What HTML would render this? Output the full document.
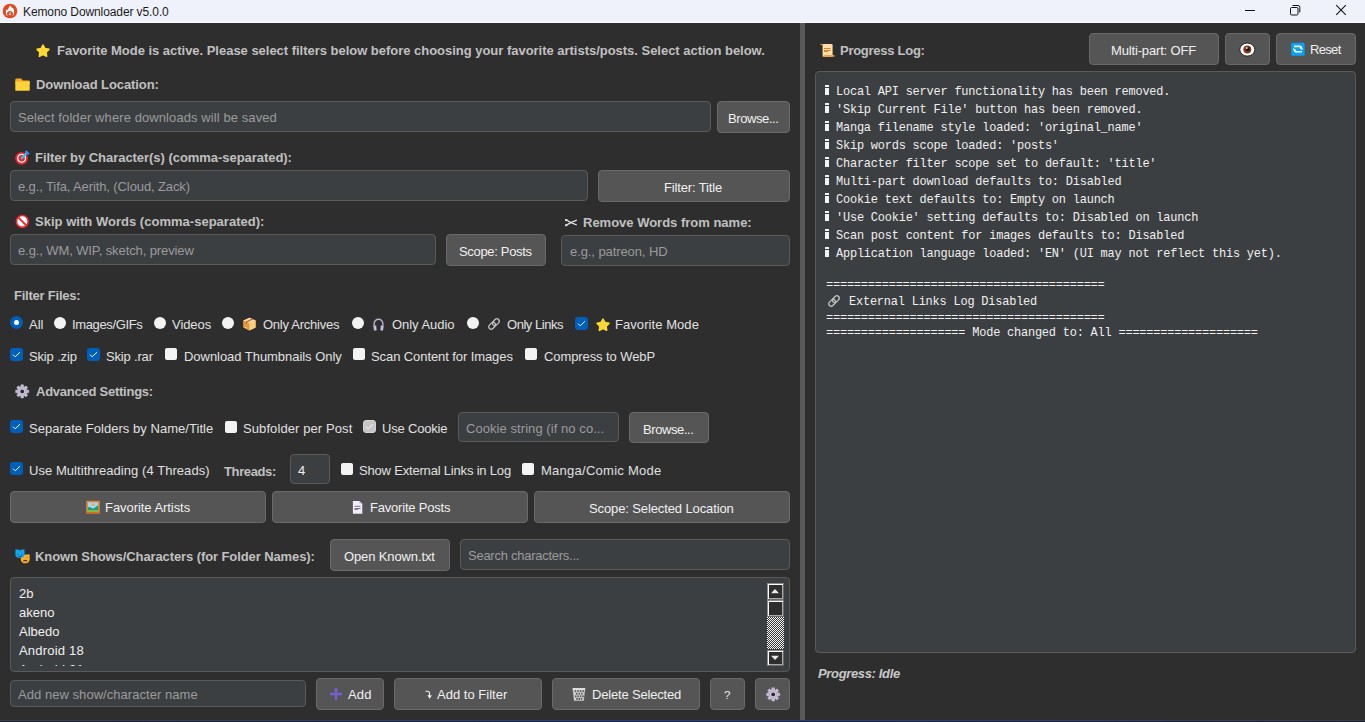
<!DOCTYPE html>
<html><head><meta charset="utf-8">
<style>
*{box-sizing:border-box}
html,body{margin:0;padding:0}
body{width:1365px;height:722px;overflow:hidden;position:relative;background:#2E2E2E;font-family:"Liberation Sans",sans-serif;font-size:13px;color:#E0E0E0}
.a{position:absolute}
.t{position:absolute;white-space:nowrap;line-height:16px;font-size:13px}
.lb{font-weight:bold;color:#C0C0C0}
.ph{color:#9A9B9C}
.bt{color:#F0F0F0}
.cb{color:#E0E0E0}
.inp{position:absolute;background:#3C3F41;border:1px solid #5A5A5A;border-radius:4px}
.btn{position:absolute;background:#555555;border:1px solid #6A6A6A;border-radius:4px}
.chk{position:absolute;width:13px;height:13px;border-radius:3px;background:#005FB8}
.unc{position:absolute;width:12px;height:12px;border-radius:2px;background:#F3F3F3}
.rad{position:absolute;width:12px;height:12px;border-radius:50%;background:#F3F3F3}
.log{position:absolute;white-space:pre;font-family:"Liberation Mono",monospace;font-size:11.95px;letter-spacing:-0.2px;line-height:16px;color:#F0F0F0}
svg{position:absolute;overflow:visible}
</style></head><body>

<!-- title bar -->
<div class="a" style="left:0;top:0;width:1365px;height:22px;background:#EFF2FB"></div>
<div class="a" style="left:0;top:22px;width:1365px;height:1px;background:#FFFFFF"></div>
<div class="t" style="left:23px;top:4px;font-size:12px;color:#1A1A1A;letter-spacing:-0.1px">Kemono Downloader v5.0.0</div>

<!-- splitter -->
<div class="a" style="left:800px;top:23px;width:5px;height:697px;background:#5A5A5A"></div>
<!-- bottom border -->
<div class="a" style="left:0;top:720px;width:1365px;height:1px;background:linear-gradient(90deg,#3A3D45 0%,#35405E 45%,#353D58 70%,#3A3C46 100%)"></div>
<div class="a" style="left:0;top:721px;width:1365px;height:1px;background:linear-gradient(90deg,#1B202C 0%,#16235E 45%,#172254 70%,#1B1E2C 100%)"></div>

<!-- LEFT PANEL -->
<div class="t lb" style="left:57px;top:43px;letter-spacing:-0.022px">Favorite Mode is active. Please select filters below before choosing your favorite artists/posts. Select action below.</div>

<div class="t lb" style="left:36px;top:77px;letter-spacing:-0.076px">Download Location:</div>
<div class="inp" style="left:10px;top:101px;width:701px;height:31px"></div>
<div class="t ph" style="left:18px;top:110px;letter-spacing:0.088px">Select folder where downloads will be saved</div>
<div class="btn" style="left:717px;top:101px;width:73px;height:32px"></div>
<div class="t bt" style="left:728px;top:111px;letter-spacing:-0.41px">Browse...</div>

<div class="t lb" style="left:35px;top:150px;letter-spacing:-0.042px">Filter by Character(s) (comma-separated):</div>
<div class="inp" style="left:10px;top:170px;width:578px;height:31px"></div>
<div class="t ph" style="left:18px;top:179px;letter-spacing:-0.109px">e.g., Tifa, Aerith, (Cloud, Zack)</div>
<div class="btn" style="left:598px;top:170px;width:192px;height:32px"></div>
<div class="t bt" style="left:664px;top:180px;letter-spacing:-0.150px">Filter: Title</div>

<div class="t lb" style="left:35px;top:214px;letter-spacing:0.021px">Skip with Words (comma-separated):</div>
<div class="t lb" style="left:583px;top:215px;letter-spacing:-0.005px">Remove Words from name:</div>
<div class="inp" style="left:10px;top:234px;width:426px;height:31px"></div>
<div class="t ph" style="left:18px;top:243px;letter-spacing:-0.107px">e.g., WM, WIP, sketch, preview</div>
<div class="btn" style="left:446px;top:234px;width:100px;height:32px"></div>
<div class="t bt" style="left:459px;top:244px;letter-spacing:-0.318px">Scope: Posts</div>
<div class="inp" style="left:561px;top:235px;width:229px;height:31px"></div>
<div class="t ph" style="left:570px;top:244px;letter-spacing:-0.087px">e.g., patreon, HD</div>

<div class="t lb" style="left:14px;top:288px;letter-spacing:-0.225px">Filter Files:</div>

<!-- radios -->
<div class="a" style="left:10px;top:316px;width:13px;height:13px;border-radius:50%;background:#005FB8"></div>
<div class="a" style="left:14px;top:320px;width:5px;height:5px;border-radius:50%;background:#FFFFFF"></div>
<div class="t cb" style="left:29px;top:317px">All</div>
<div class="rad" style="left:54px;top:317px"></div>
<div class="t cb" style="left:72px;top:317px;letter-spacing:-0.360px">Images/GIFs</div>
<div class="rad" style="left:154px;top:317px"></div>
<div class="t cb" style="left:172px;top:317px;letter-spacing:-0.060px">Videos</div>
<div class="rad" style="left:222px;top:317px"></div>
<div class="t cb" style="left:263px;top:317px;letter-spacing:-0.258px">Only Archives</div>
<div class="rad" style="left:352px;top:317px"></div>
<div class="t cb" style="left:392px;top:317px;letter-spacing:-0.044px">Only Audio</div>
<div class="rad" style="left:467px;top:317px"></div>
<div class="t cb" style="left:507px;top:317px;letter-spacing:-0.467px">Only Links</div>
<div class="chk" style="left:575px;top:317px"></div>
<svg width="13" height="13" style="left:575px;top:317px"><polyline points="3,6.6 5.2,8.8 10,4.2" fill="none" stroke="#F2F5FA" stroke-width="1"/></svg>
<div class="t cb" style="left:615px;top:317px;letter-spacing:0.067px">Favorite Mode</div>

<!-- checkboxes row -->
<div class="chk" style="left:10px;top:348px"></div>
<svg width="13" height="13" style="left:10px;top:348px"><polyline points="3,6.6 5.2,8.8 10,4.2" fill="none" stroke="#F2F5FA" stroke-width="1"/></svg>
<div class="t cb" style="left:29px;top:349px;letter-spacing:-0.150px">Skip .zip</div>
<div class="chk" style="left:87px;top:348px"></div>
<svg width="13" height="13" style="left:87px;top:348px"><polyline points="3,6.6 5.2,8.8 10,4.2" fill="none" stroke="#F2F5FA" stroke-width="1"/></svg>
<div class="t cb" style="left:106px;top:349px;letter-spacing:-0.175px">Skip .rar</div>
<div class="unc" style="left:165px;top:348px"></div>
<div class="t cb" style="left:184px;top:349px;letter-spacing:-0.043px">Download Thumbnails Only</div>
<div class="unc" style="left:353px;top:348px"></div>
<div class="t cb" style="left:371px;top:349px;letter-spacing:-0.086px">Scan Content for Images</div>
<div class="unc" style="left:525px;top:348px"></div>
<div class="t cb" style="left:544px;top:349px;letter-spacing:-0.093px">Compress to WebP</div>

<div class="t lb" style="left:36px;top:384px;letter-spacing:-0.247px">Advanced Settings:</div>

<!-- row adv 1 -->
<div class="chk" style="left:10px;top:420px"></div>
<svg width="13" height="13" style="left:10px;top:420px"><polyline points="3,6.6 5.2,8.8 10,4.2" fill="none" stroke="#F2F5FA" stroke-width="1"/></svg>
<div class="t cb" style="left:29px;top:421px;letter-spacing:0.041px">Separate Folders by Name/Title</div>
<div class="unc" style="left:225px;top:421px"></div>
<div class="t cb" style="left:243px;top:421px;letter-spacing:0.094px">Subfolder per Post</div>
<div class="a" style="left:363px;top:420px;width:13px;height:13px;border-radius:3px;background:#C6C6C6;border:1px solid #D4D4D4"></div>
<svg width="13" height="13" style="left:363px;top:420px"><polyline points="3,6.6 5.2,8.8 10,4.2" fill="none" stroke="#F6F6F6" stroke-width="1"/></svg>
<div class="t cb" style="left:382px;top:421px;letter-spacing:-0.189px">Use Cookie</div>
<div class="inp" style="left:458px;top:412px;width:161px;height:30px"></div>
<div class="t ph" style="left:466px;top:421px;letter-spacing:0.064px">Cookie string (if no co...</div>
<div class="btn" style="left:629px;top:412px;width:80px;height:31px"></div>
<div class="t bt" style="left:643px;top:422px;letter-spacing:-0.41px">Browse...</div>

<!-- row adv 2 -->
<div class="chk" style="left:10px;top:462px"></div>
<svg width="13" height="13" style="left:10px;top:462px"><polyline points="3,6.6 5.2,8.8 10,4.2" fill="none" stroke="#F2F5FA" stroke-width="1"/></svg>
<div class="t cb" style="left:29px;top:463px;letter-spacing:0.055px">Use Multithreading (4 Threads)</div>
<div class="t lb" style="left:224px;top:464px;letter-spacing:-0.371px">Threads:</div>
<div class="inp" style="left:290px;top:454px;width:40px;height:30px"></div>
<div class="t bt" style="left:298px;top:463px">4</div>
<div class="unc" style="left:341px;top:463px"></div>
<div class="t cb" style="left:359px;top:463px;letter-spacing:-0.188px">Show External Links in Log</div>
<div class="unc" style="left:522px;top:463px"></div>
<div class="t cb" style="left:541px;top:463px;letter-spacing:0.267px">Manga/Comic Mode</div>

<!-- favorite buttons -->
<div class="btn" style="left:10px;top:491px;width:256px;height:32px"></div>
<div class="t bt" style="left:105px;top:500px;letter-spacing:-0.053px">Favorite Artists</div>
<div class="btn" style="left:272px;top:491px;width:256px;height:32px"></div>
<div class="t bt" style="left:370px;top:500px;letter-spacing:-0.200px">Favorite Posts</div>
<div class="btn" style="left:534px;top:491px;width:256px;height:32px"></div>
<div class="t bt" style="left:589px;top:501px;letter-spacing:-0.113px">Scope: Selected Location</div>

<!-- known shows -->
<div class="t lb" style="left:35px;top:549px;letter-spacing:-0.098px">Known Shows/Characters (for Folder Names):</div>
<div class="btn" style="left:330px;top:539px;width:120px;height:32px"></div>
<div class="t bt" style="left:344px;top:549px;letter-spacing:-0.123px">Open Known.txt</div>
<div class="inp" style="left:460px;top:539px;width:330px;height:31px"></div>
<div class="t ph" style="left:468px;top:548px;letter-spacing:-0.258px">Search characters...</div>

<div class="inp" style="left:10px;top:577px;width:780px;height:95px;overflow:hidden">
</div>
<div class="a" style="left:11px;top:582px;width:750px;height:84px;overflow:hidden">
  <div class="t bt" style="left:8px;top:4px">2b</div>
  <div class="t bt" style="left:8px;top:23px">akeno</div>
  <div class="t bt" style="left:8px;top:42px">Albedo</div>
  <div class="t bt" style="left:8px;top:61px;letter-spacing:0.2px">Android 18</div>
  <div class="t bt" style="left:8px;top:80px;letter-spacing:0.2px">Android 21</div>
</div>

<!-- scrollbar -->
<div class="a" style="left:767px;top:583px;width:17px;height:17px;background:#2E2E2E;border-top:1px solid #8C8C8C;border-left:1px solid #8C8C8C;border-right:1px solid #6A6A6A;border-bottom:1px solid #6A6A6A;box-shadow:inset 1px 1px 0 #FFFFFF,inset -1px -1px 0 #A8A8A8"></div>
<svg width="17" height="17" style="left:767px;top:583px"><path d="M4 10.2H12L8 6Z" fill="#E8E8E8"/></svg>
<div class="a" style="left:767px;top:600px;width:17px;height:17px;background:#2E2E2E;border-top:1px solid #8C8C8C;border-left:1px solid #8C8C8C;border-right:1px solid #6A6A6A;border-bottom:1px solid #6A6A6A;box-shadow:inset 1px 1px 0 #FFFFFF,inset -1px -1px 0 #A8A8A8"></div>
<svg width="17" height="32" style="left:767px;top:617px" shape-rendering="crispEdges"><defs><pattern id="ck" width="2" height="2" patternUnits="userSpaceOnUse"><rect width="2" height="2" fill="#3A3A3A"/><rect width="1" height="1" fill="#F4F4F4"/><rect x="1" y="1" width="1" height="1" fill="#F4F4F4"/></pattern></defs><rect width="17" height="32" fill="url(#ck)"/></svg>
<div class="a" style="left:767px;top:650px;width:17px;height:16px;background:#2E2E2E;border-top:1px solid #8C8C8C;border-left:1px solid #8C8C8C;border-right:1px solid #6A6A6A;border-bottom:1px solid #6A6A6A;box-shadow:inset 1px 1px 0 #FFFFFF,inset -1px -1px 0 #A8A8A8"></div>
<svg width="17" height="16" style="left:767px;top:650px"><path d="M4 5.8H12L8 10Z" fill="#E8E8E8"/></svg>
<!-- bottom row -->
<div class="inp" style="left:10px;top:680px;width:296px;height:27px"></div>
<div class="t ph" style="left:18px;top:687px;letter-spacing:0.046px">Add new show/character name</div>
<div class="btn" style="left:316px;top:678px;width:68px;height:32px"></div>
<div class="t bt" style="left:348px;top:687px;letter-spacing:0.150px">Add</div>
<div class="btn" style="left:394px;top:678px;width:148px;height:32px"></div>
<div class="t bt" style="left:437px;top:687px;letter-spacing:0.017px">Add to Filter</div>
<div class="btn" style="left:552px;top:678px;width:148px;height:32px"></div>
<div class="t bt" style="left:592px;top:687px;letter-spacing:-0.179px">Delete Selected</div>
<div class="btn" style="left:710px;top:678px;width:35px;height:32px"></div>
<div class="t bt" style="left:724px;top:687px;font-size:11.5px">?</div>
<div class="btn" style="left:755px;top:678px;width:35px;height:32px"></div>

<!-- RIGHT PANEL -->
<div class="t lb" style="left:840px;top:43px;letter-spacing:-0.267px">Progress Log:</div>
<div class="btn" style="left:1089px;top:33px;width:130px;height:32px"></div>
<div class="t bt" style="left:1111px;top:43px;letter-spacing:-0.157px">Multi-part: OFF</div>
<div class="btn" style="left:1225px;top:33px;width:45px;height:32px"></div>
<div class="btn" style="left:1276px;top:33px;width:80px;height:32px"></div>
<div class="t bt" style="left:1310px;top:42px;letter-spacing:-0.675px">Reset</div>

<div class="inp" style="left:815px;top:71px;width:541px;height:582px"></div>
<div class="log" style="left:836px;top:84px">Local API server functionality has been removed.</div>
<svg class="a" width="6" height="11" style="left:825px;top:85px"><rect x="0" y="0" width="4" height="2" fill="#F4F4F4"/><rect x="0" y="3" width="4" height="7" fill="#F4F4F4"/></svg>
<div class="log" style="left:836px;top:102px">&#39;Skip Current File&#39; button has been removed.</div>
<svg class="a" width="6" height="11" style="left:825px;top:103px"><rect x="0" y="0" width="4" height="2" fill="#F4F4F4"/><rect x="0" y="3" width="4" height="7" fill="#F4F4F4"/></svg>
<div class="log" style="left:836px;top:120px">Manga filename style loaded: &#39;original_name&#39;</div>
<svg class="a" width="6" height="11" style="left:825px;top:121px"><rect x="0" y="0" width="4" height="2" fill="#F4F4F4"/><rect x="0" y="3" width="4" height="7" fill="#F4F4F4"/></svg>
<div class="log" style="left:836px;top:138px">Skip words scope loaded: &#39;posts&#39;</div>
<svg class="a" width="6" height="11" style="left:825px;top:139px"><rect x="0" y="0" width="4" height="2" fill="#F4F4F4"/><rect x="0" y="3" width="4" height="7" fill="#F4F4F4"/></svg>
<div class="log" style="left:836px;top:156px">Character filter scope set to default: &#39;title&#39;</div>
<svg class="a" width="6" height="11" style="left:825px;top:157px"><rect x="0" y="0" width="4" height="2" fill="#F4F4F4"/><rect x="0" y="3" width="4" height="7" fill="#F4F4F4"/></svg>
<div class="log" style="left:836px;top:174px">Multi-part download defaults to: Disabled</div>
<svg class="a" width="6" height="11" style="left:825px;top:175px"><rect x="0" y="0" width="4" height="2" fill="#F4F4F4"/><rect x="0" y="3" width="4" height="7" fill="#F4F4F4"/></svg>
<div class="log" style="left:836px;top:192px">Cookie text defaults to: Empty on launch</div>
<svg class="a" width="6" height="11" style="left:825px;top:193px"><rect x="0" y="0" width="4" height="2" fill="#F4F4F4"/><rect x="0" y="3" width="4" height="7" fill="#F4F4F4"/></svg>
<div class="log" style="left:836px;top:210px">&#39;Use Cookie&#39; setting defaults to: Disabled on launch</div>
<svg class="a" width="6" height="11" style="left:825px;top:211px"><rect x="0" y="0" width="4" height="2" fill="#F4F4F4"/><rect x="0" y="3" width="4" height="7" fill="#F4F4F4"/></svg>
<div class="log" style="left:836px;top:228px">Scan post content for images defaults to: Disabled</div>
<svg class="a" width="6" height="11" style="left:825px;top:229px"><rect x="0" y="0" width="4" height="2" fill="#F4F4F4"/><rect x="0" y="3" width="4" height="7" fill="#F4F4F4"/></svg>
<div class="log" style="left:836px;top:246px">Application language loaded: &#39;EN&#39; (UI may not reflect this yet).</div>
<svg class="a" width="6" height="11" style="left:825px;top:247px"><rect x="0" y="0" width="4" height="2" fill="#F4F4F4"/><rect x="0" y="3" width="4" height="7" fill="#F4F4F4"/></svg>
<div class="log" style="left:826px;top:277px">========================================</div>
<div class="log" style="left:849px;top:294px">External Links Log Disabled</div>
<div class="log" style="left:826px;top:310px">========================================</div>
<div class="log" style="left:826px;top:325px">==================== Mode changed to: All ====================</div>


<div class="t" style="left:818px;top:666px;font-weight:bold;font-style:italic;color:#C8C8C8;letter-spacing:-0.346px">Progress: Idle</div>

<svg width="16" height="16" style="left:2px;top:3px"><circle cx="8" cy="8" r="7.3" fill="#E2481F"/><path d="M8 2.2 C9 4 10.6 5 11.4 5.6 C12.6 7.8 12.4 11 10.8 13 L5.2 13 C3.6 11 3.4 8.4 4.4 6.2 C5 7 5.6 7.2 5.9 6.8 C6.4 5 7.6 3.8 8 2.2Z" fill="#FFFFFF"/><circle cx="8" cy="11" r="3" fill="#E2481F"/><path d="M7.4 9.2H8.6V11H9.6L8 12.6 6.4 11H7.4Z" fill="#FFFFFF" opacity="0.8"/></svg>
<div class="a" style="left:1245px;top:10px;width:10px;height:1px;background:#111"></div>
<svg width="12" height="12" style="left:1289px;top:4px"><rect x="1.5" y="3.5" width="7.5" height="7.5" rx="1.2" fill="none" stroke="#111" stroke-width="1"/><path d="M3.5 1.5H9A1.8 1.8 0 0 1 10.8 3.3V8.5" fill="none" stroke="#111" stroke-width="1"/></svg>
<svg width="12" height="12" style="left:1335px;top:4px"><path d="M1.2 1.2L10.8 10.8M10.8 1.2L1.2 10.8" stroke="#111" stroke-width="1.05"/></svg>
<svg width="14" height="13" style="left:36px;top:44px"><path d="M7.00 1.10 L8.94 4.63 L12.90 5.38 L10.14 8.32 L10.64 12.32 L7.00 10.60 L3.36 12.32 L3.86 8.32 L1.10 5.38 L5.06 4.63Z" fill="#FDD835" stroke="#FDD835" stroke-width="1.6" stroke-linejoin="round"/></svg>
<svg width="14" height="13" style="left:596px;top:318px"><path d="M7.00 1.10 L8.94 4.63 L12.90 5.38 L10.14 8.32 L10.64 12.32 L7.00 10.60 L3.36 12.32 L3.86 8.32 L1.10 5.38 L5.06 4.63Z" fill="#FDD835" stroke="#FDD835" stroke-width="1.6" stroke-linejoin="round"/></svg>
<svg width="15" height="13" style="left:15px;top:78px"><path d="M0.3 1.8Q0.3 0.6 1.4 0.6H6.2L7.8 2.4H13.6Q14.7 2.4 14.7 3.5V6H0.3Z" fill="#F9A825"/><rect x="0.3" y="3.6" width="14.4" height="9.2" rx="0.9" fill="#FDD33A"/></svg>
<svg width="17" height="17" style="left:14px;top:149px"><circle cx="7.6" cy="9.3" r="6.4" fill="#F2232A"/><circle cx="7.6" cy="9.3" r="3.9" fill="none" stroke="#FFFFFF" stroke-width="1.3"/><path d="M7.6 9.3L12.8 4.1" stroke="#2FC3F0" stroke-width="2.2" stroke-linecap="round"/><path d="M11 2.6L12.6 1.2 14.2 3.2 15.8 4.4 14.4 5.6 12.2 5.8Z" fill="#3A8FF0"/></svg>
<svg width="15" height="15" style="left:15px;top:214px"><circle cx="7.3" cy="7.4" r="5.9" fill="#FFFFFF" stroke="#F2262C" stroke-width="1.7"/><path d="M3.2 3.3L11.4 11.5" stroke="#F2262C" stroke-width="1.8"/></svg>
<svg width="14" height="9" style="left:564px;top:218px"><path d="M1.4 1.8C2.6 1.6 3.6 2.4 4.6 3.4 L6.9 4.6 L12.8 2.2 M1.4 7.4C2.6 7.6 3.6 6.8 4.6 5.8 L6.9 4.6 L12.8 7" fill="none" stroke="#E2E2E2" stroke-width="1.3" stroke-linejoin="round"/><rect x="1" y="1.2" width="2.2" height="1.8" fill="#E2E2E2"/><rect x="1" y="6.4" width="2.2" height="1.8" fill="#E2E2E2"/></svg>
<svg width="13" height="14" style="left:243px;top:317px"><path d="M6.5 0.7L12.6 3.6V10.6L6.5 13.6L0.4 10.6V3.6Z" fill="#F2B45A"/><path d="M0.4 3.6L6.5 6.5V13.6L0.4 10.6Z" fill="#E59A3A"/><path d="M6.5 6.5L12.6 3.6V10.6L6.5 13.6Z" fill="#FBCB7E"/><path d="M6.5 0.7L12.6 3.6 6.5 6.5 0.4 3.6Z" fill="#FFD79A"/><path d="M9.6 2.1L3.4 5V6.8" fill="none" stroke="#9C5C3C" stroke-width="1.1"/><rect x="2" y="10" width="1.4" height="1.2" fill="#DDE3EA"/></svg>
<svg width="13" height="14" style="left:372px;top:317px"><path d="M2.2 8.5V6.6A4.3 4.3 0 0 1 10.8 6.6V8.5" fill="none" stroke="#BDB3CC" stroke-width="1.4"/><path d="M1.2 8.4H4.2L4.6 13.6H2Z" fill="#C9BFD9"/><path d="M8.8 8.4H11.8L11 13.6H8.4Z" fill="#C9BFD9"/></svg>
<svg width="14" height="14" style="left:487px;top:317px"><g transform="rotate(-45 7 7)"><rect x="0.6" y="4.6" width="7.6" height="4.8" rx="2.4" fill="none" stroke="#C4C4C4" stroke-width="1.3"/><rect x="5.8" y="4.6" width="7.6" height="4.8" rx="2.4" fill="none" stroke="#C4C4C4" stroke-width="1.3"/></g></svg>
<svg width="14" height="14" style="left:827px;top:294px"><g transform="rotate(-45 7 7)"><rect x="0.6" y="4.6" width="7.6" height="4.8" rx="2.4" fill="none" stroke="#C4C4C4" stroke-width="1.3"/><rect x="5.8" y="4.6" width="7.6" height="4.8" rx="2.4" fill="none" stroke="#C4C4C4" stroke-width="1.3"/></g></svg>
<svg width="15" height="15" style="left:15px;top:384px"><path d="M12.04 6.16 L13.77 6.07 L13.77 8.73 L12.04 8.64 L11.50 9.95 L12.78 11.10 L10.90 12.98 L9.75 11.70 L8.44 12.24 L8.53 13.97 L5.87 13.97 L5.96 12.24 L4.65 11.70 L3.50 12.98 L1.62 11.10 L2.90 9.95 L2.36 8.64 L0.63 8.73 L0.63 6.07 L2.36 6.16 L2.90 4.85 L1.62 3.70 L3.50 1.82 L4.65 3.10 L5.96 2.56 L5.87 0.83 L8.53 0.83 L8.44 2.56 L9.75 3.10 L10.90 1.82 L12.78 3.70 L11.50 4.85Z" fill="#C7BDD6" stroke="#C7BDD6" stroke-width="0.5" stroke-linejoin="round"/><circle cx="7.2" cy="7.4" r="3.4" fill="#D9D0E6"/><circle cx="7.2" cy="7.4" r="3.4" fill="none" stroke="#9F92B6" stroke-width="0.6"/><circle cx="7.2" cy="7.4" r="1.9" fill="#2A2A2A"/></svg>
<svg width="15" height="15" style="left:766px;top:687px"><path d="M12.04 6.16 L13.77 6.07 L13.77 8.73 L12.04 8.64 L11.50 9.95 L12.78 11.10 L10.90 12.98 L9.75 11.70 L8.44 12.24 L8.53 13.97 L5.87 13.97 L5.96 12.24 L4.65 11.70 L3.50 12.98 L1.62 11.10 L2.90 9.95 L2.36 8.64 L0.63 8.73 L0.63 6.07 L2.36 6.16 L2.90 4.85 L1.62 3.70 L3.50 1.82 L4.65 3.10 L5.96 2.56 L5.87 0.83 L8.53 0.83 L8.44 2.56 L9.75 3.10 L10.90 1.82 L12.78 3.70 L11.50 4.85Z" fill="#C7BDD6" stroke="#C7BDD6" stroke-width="0.5" stroke-linejoin="round"/><circle cx="7.2" cy="7.4" r="3.4" fill="#D9D0E6"/><circle cx="7.2" cy="7.4" r="3.4" fill="none" stroke="#9F92B6" stroke-width="0.6"/><circle cx="7.2" cy="7.4" r="1.9" fill="#2A2A2A"/></svg>
<svg width="14" height="14" style="left:86px;top:500px"><rect x="0.2" y="0.8" width="13.6" height="12.8" fill="#E0852E"/><rect x="1.9" y="2.3" width="10.2" height="9.6" fill="#A5D4F6"/><circle cx="7" cy="4.6" r="1.4" fill="#FFA62B"/><path d="M1.9 7.4C3 6.8 4.4 7 5.4 8 L7.6 8.6 C9 7.4 10.6 6 12.1 5.5V11.9H1.9Z" fill="#1F9D73"/><rect x="1.9" y="10.2" width="10.2" height="1.7" fill="#8BC34A"/><rect x="0.2" y="11.9" width="13.6" height="1.7" fill="#C96E22"/></svg>
<svg width="11" height="14" style="left:352px;top:500px"><path d="M0.9 0.9H7.2L10.3 3.9V13.7H0.9Z" fill="#F1ECF8"/><path d="M7.2 0.9V3.9H10.3" fill="#D6CCE6"/><rect x="2.5" y="5.8" width="6" height="1" fill="#7F6D99"/><rect x="2.5" y="8" width="6" height="1" fill="#7F6D99"/><rect x="2.5" y="9" width="3.6" height="0.9" fill="#7F6D99"/></svg>
<svg width="16" height="16" style="left:15px;top:549px"><path d="M5.8 5.5H14.7V10.4C14.7 12.8 12.8 14.3 10.25 14.3 7.7 14.3 5.8 12.8 5.8 10.4Z" fill="#FBAE2C"/><path d="M8.4 12.2Q10.3 10.6 12.2 12.2" stroke="#4A3414" stroke-width="1.2" fill="none"/><path d="M11.2 8.6H13" stroke="#B07A20" stroke-width="0.8"/><path d="M0.4 0.6L3.6 0.6 4.95 1.8 6.3 0.6 9.5 0.6V5.8C9.5 8 7.6 9.1 4.95 9.1 2.3 9.1 0.4 8 0.4 5.8Z" fill="#14A3EC"/><path d="M3.4 7.2Q4.95 8.4 6.5 7.2" stroke="#0B4F86" stroke-width="1" fill="none"/><path d="M2 5.6H3.6M6.3 5.6H7.9" stroke="#0B6FB0" stroke-width="0.7"/></svg>
<svg width="14" height="14" style="left:329px;top:687px"><path d="M7 1.3V12.9M1.1 7.1H12.9" stroke="#7A5CD3" stroke-width="2.5"/></svg>
<svg width="8" height="10" style="left:425px;top:690px"><path d="M0.5 1.2H2.6Q4.6 1.4 4.6 3.6V6.4M3 5L4.6 7.8 6.4 5.2" fill="none" stroke="#F4F4F4" stroke-width="1.1"/></svg>
<svg width="14" height="14" style="left:572px;top:687px"><path d="M0.6 1.2H13.2L11.8 13.8H2Z" fill="#D0D0D0"/><rect x="0.6" y="1.2" width="12.6" height="1.4" fill="#E6E6E6"/><rect x="2.6" y="3.2" width="1.5" height="1.9" fill="#5A5A5A"/><rect x="5.2" y="3.2" width="1.5" height="1.9" fill="#5A5A5A"/><rect x="7.8" y="3.2" width="1.5" height="1.9" fill="#5A5A5A"/><rect x="10.4" y="3.2" width="1.5" height="1.9" fill="#5A5A5A"/><rect x="3.9" y="5.8" width="1.5" height="1.9" fill="#5A5A5A"/><rect x="6.5" y="5.8" width="1.5" height="1.9" fill="#5A5A5A"/><rect x="9.1" y="5.8" width="1.5" height="1.9" fill="#5A5A5A"/><rect x="2.9" y="8.4" width="1.5" height="1.9" fill="#5A5A5A"/><rect x="5.3" y="8.4" width="1.5" height="1.9" fill="#5A5A5A"/><rect x="7.8" y="8.4" width="1.5" height="1.9" fill="#5A5A5A"/><rect x="10.2" y="8.4" width="1.5" height="1.9" fill="#5A5A5A"/><rect x="4.2" y="11.0" width="1.5" height="1.9" fill="#5A5A5A"/><rect x="6.5" y="11.0" width="1.5" height="1.9" fill="#5A5A5A"/><rect x="8.8" y="11.0" width="1.5" height="1.9" fill="#5A5A5A"/></svg>
<svg width="15" height="14" style="left:820px;top:43px"><path d="M0.4 1.1H3.4V2H0.4Z" fill="#F39A3D"/><rect x="2.6" y="1.1" width="10" height="12.6" rx="1.2" fill="#FFDFA8"/><rect x="4" y="5" width="6.6" height="1" fill="#D9822B"/><rect x="4" y="7" width="6.6" height="1" fill="#D9822B"/><rect x="4" y="8" width="4" height="0.9" fill="#D9822B"/><path d="M4.2 12H14.4V13.8H2.6Z" fill="#F0A04B"/></svg>
<svg width="17" height="16" style="left:1239px;top:42px"><ellipse cx="8.3" cy="7.6" rx="7.5" ry="6.5" fill="#FFFFFF" stroke="#151515" stroke-width="0.9"/><circle cx="8.3" cy="7.4" r="4" fill="#8A3A1C"/><circle cx="8.8" cy="7.1" r="2.2" fill="#1B1B1B"/><rect x="6.9" y="5.2" width="1.6" height="1.6" fill="#FFFFFF"/></svg>
<svg width="14" height="14" style="left:1291px;top:42px"><rect x="0.2" y="0.8" width="13.4" height="13" rx="1.6" fill="#0AA3EF"/><path d="M3 4.4H8.6Q10.4 4.6 10.6 6.6L9.2 5.6M10.8 9.8H5.2Q3.4 9.6 3.2 7.6L4.6 8.6" fill="none" stroke="#FFFFFF" stroke-width="1.6"/></svg>
</body></html>
